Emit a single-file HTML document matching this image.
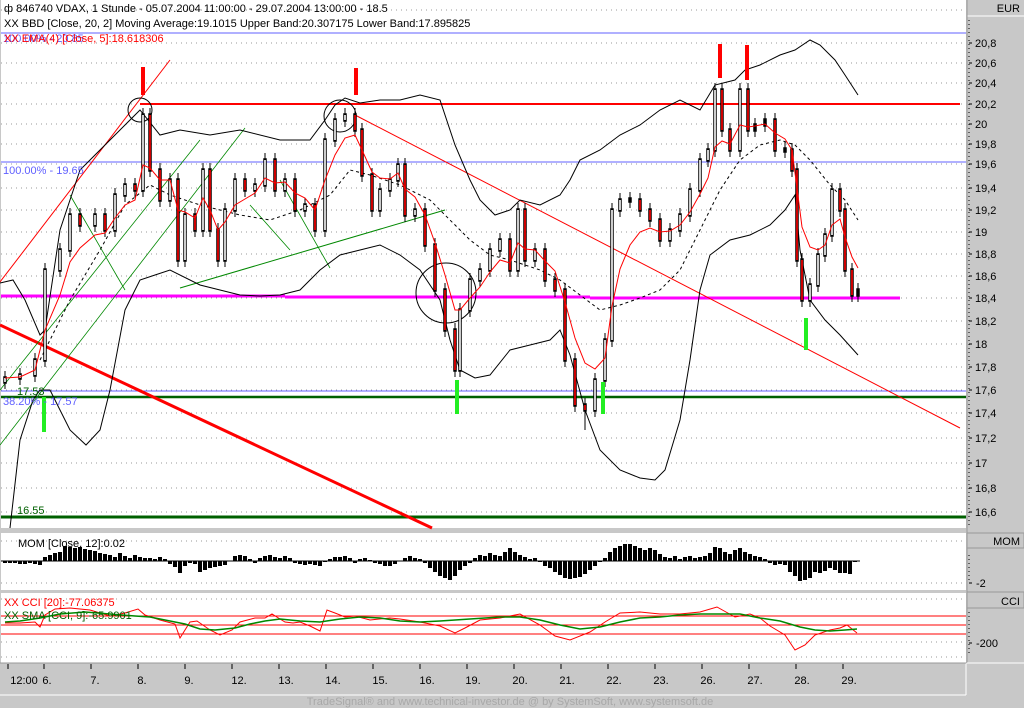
<!DOCTYPE html>
<html><head><meta charset="utf-8"><style>
body{margin:0;background:#c8c8c8;width:1024px;height:708px;overflow:hidden}
svg{position:absolute;left:0;top:0}
text{font-family:"Liberation Sans",sans-serif;font-size:11px}
</style></head><body>
<svg width="1024" height="708" xmlns="http://www.w3.org/2000/svg">
<rect x="0" y="0" width="1024" height="708" fill="#c8c8c8"/>
<rect x="1" y="0" width="965" height="528" fill="#fff"/>
<rect x="1" y="533" width="965" height="57" fill="#fff"/>
<rect x="1" y="593" width="965" height="70" fill="#fff"/>
<line x1="966" y1="663" x2="966" y2="695" stroke="#fff"/>
<line x1="0" y1="695" x2="966" y2="695" stroke="#fff"/>
<line x1="0" y1="663" x2="966" y2="663" stroke="#999"/>
<line x1="967" y1="16" x2="1024" y2="16" stroke="#fff"/>
<line x1="967" y1="0" x2="967" y2="663" stroke="#999"/>
<text x="1020" y="12" font-size="12" text-anchor="end">EUR</text>
<rect x="967" y="533" width="57" height="15" fill="#c8c8c8" stroke="#999"/>
<text x="1020" y="545" font-size="12" text-anchor="end">MOM</text>
<rect x="967" y="592" width="57" height="16" fill="#c8c8c8" stroke="#999"/>
<text x="1020" y="605" font-size="12" text-anchor="end">CCI</text>
<line x1="967" y1="663" x2="1024" y2="663" stroke="#fff"/>

<!-- grid -->
<path d="M1 10H966M1 43H966M1 63H966M1 83H966M1 104H966M1 124H966M1 144H966M1 164H966M1 188H966M1 210H966M1 232H966M1 254H966M1 276H966M1 298H966M1 321H966M1 344H966M1 367H966M1 390H966M1 413H966M1 438H966M1 463H966M1 488H966M1 512H966M1 541H966M1 583H966M1 599H966M1 642H966M1 657H966" stroke="#999" stroke-dasharray="1 4"/>
<path d="M969 20V528M969 555V583M969 612V655" stroke="#000" stroke-dasharray="1 3"/>
<path d="M969 43h3M969 63h3M969 83h3M969 104h3M969 124h3M969 144h3M969 164h3M969 188h3M969 210h3M969 232h3M969 254h3M969 276h3M969 298h3M969 321h3M969 344h3M969 367h3M969 390h3M969 413h3M969 438h3M969 463h3M969 488h3M969 512h3M969 583h3M969 643h3" stroke="#000"/>
<g font-size="12">
<text x="975" y="47">20,8</text><text x="975" y="67">20,6</text><text x="975" y="87">20,4</text><text x="975" y="108">20,2</text><text x="975" y="128">20</text><text x="975" y="148">19,8</text><text x="975" y="168">19,6</text><text x="975" y="192">19,4</text><text x="975" y="214">19,2</text><text x="975" y="236">19</text><text x="975" y="258">18,8</text><text x="975" y="280">18,6</text><text x="975" y="302">18,4</text><text x="975" y="325">18,2</text><text x="975" y="348">18</text><text x="975" y="371">17,8</text><text x="975" y="394">17,6</text><text x="975" y="417">17,4</text><text x="975" y="442">17,2</text><text x="975" y="467">17</text><text x="975" y="492">16,8</text><text x="975" y="516">16,6</text>
<text x="976" y="587">-2</text><text x="976" y="647">-200</text>
</g>
<!-- time axis -->
<path d="M8 664v5M44 664v5M91 664v5M138 664v5M185 664v5M232 664v5M279 664v5M326 664v5M373 664v5M420 664v5M467 664v5M514 664v5M561 664v5M608 664v5M655 664v5M702 664v5M749 664v5M796 664v5M843 664v5" stroke="#000"/>
<g font-size="12" text-anchor="middle">
<text x="24" y="684">12:00</text><text x="47" y="684">6.</text><text x="95" y="684">7.</text><text x="142" y="684">8.</text><text x="189" y="684">9.</text><text x="239" y="684">12.</text><text x="286" y="684">13.</text><text x="333" y="684">14.</text><text x="380" y="684">15.</text><text x="427" y="684">16.</text><text x="473" y="684">19.</text><text x="520" y="684">20.</text><text x="567" y="684">21.</text><text x="614" y="684">22.</text><text x="661" y="684">23.</text><text x="708" y="684">26.</text><text x="755" y="684">27.</text><text x="802" y="684">28.</text><text x="849" y="684">29.</text>
</g>

<!-- lines -->
<path d="M1 33H966M1 162H966M1 391H966" stroke="#6060ff"/>
<path d="M1 397H966" stroke="#006000" stroke-width="2.5"/>
<path d="M1 517H966" stroke="#006000" stroke-width="3"/>
<path d="M140 104H960" stroke="#f00" stroke-width="2"/>
<path d="M1 296H285M285 297H590M590 298H900" stroke="#f0f" stroke-width="3"/>
<path d="M0 325L432 528" stroke="#f00" stroke-width="3"/>
<path d="M355 115L960 428M0 282L170 60" stroke="#f00"/>
<path d="M0 445L245 128M0 390L200 140M70 195L125 290M280 180L330 268M250 205L290 250" stroke="#080" stroke-width="0.8"/>
<path d="M180 288L445 210" stroke="#080"/>
<circle cx="140" cy="110" r="12" fill="none" stroke="#000"/>
<circle cx="340" cy="116" r="16" fill="none" stroke="#000"/>
<circle cx="446" cy="293" r="30" fill="none" stroke="#000"/>

<!-- bands -->
<polyline fill="none" stroke="#000" points="0,283 13,280 25,300 40,335 45,330 60,230 80,170 100,150 120,130 140,110 160,135 180,130 210,135 240,130 280,140 310,140 325,120 335,105 345,98 360,103 380,100 400,100 420,95 440,100 455,145 470,180 480,200 495,215 510,210 520,200 540,205 560,195 570,180 580,160 600,150 620,135 640,125 660,110 680,100 700,110 715,85 735,80 745,70 760,65 780,55 795,50 810,40 820,45 835,60 845,75 858,95"/>
<polyline fill="none" stroke="#000" points="10,528 20,440 33,400 40,390 50,390 60,410 70,430 86,445 100,430 110,390 125,310 140,280 155,275 170,270 200,285 240,295 260,296 280,295 300,290 320,270 340,255 360,250 380,245 400,255 420,270 440,300 450,340 460,370 475,378 490,375 510,350 530,345 550,340 560,330 570,355 585,410 600,450 620,470 640,478 655,480 665,470 680,420 690,360 700,290 710,255 730,240 750,235 770,225 785,210 795,195 800,250 810,300 825,320 840,335 858,355"/>
<polyline fill="none" stroke="#000" stroke-dasharray="3 3" points="40,360 70,300 100,250 125,205 150,185 170,195 200,205 240,215 270,220 300,210 330,195 350,170 370,175 400,185 430,200 450,220 470,240 490,255 510,260 540,270 560,280 580,295 600,310 620,305 640,298 660,290 680,270 700,230 720,190 740,160 760,145 780,140 795,145 810,160 830,185 845,200 858,220"/>

<!-- wicks -->
<path stroke="#000" d="M5 371V389M20 368V385M35 353V382M45 263V367M60 243V277M70 208V257M95 208V232M115 188V237M125 178V202M143 108V197M170 173V207M185 208V267M203 163V237M225 203V267M235 173V217M255 178V197M265 153V192M285 173V197M305 198V217M325 133V237M335 113V147M345 108V127M380 183V217M390 173V197M398 158V187M415 203V222M460 303V377M470 273V317M480 263V287M490 243V277M500 233V257M518 203V277M535 243V267M595 373V417M605 333V387M612 203V347M620 193V217M630 192V208M670 223V247M680 208V237M690 183V222M700 153V197M708 143V167M715 83V157M740 83V157M755 118V137M765 113V132M785 142V158M810 278V307M818 248V292M825 228V262M832 183V242M858 283V302M80 208V232M105 208V237M135 178V197M150 108V177M160 163V207M178 173V267M195 208V237M210 163V237M218 223V267M245 173V197M275 153V197M295 173V217M315 198V237M355 108V137M362 123V182M372 168V217M405 158V222M425 203V252M435 238V297M445 283V337M455 323V377M510 233V277M525 203V267M545 243V287M555 273V297M565 283V367M575 353V412M585 398V430M640 193V217M650 203V227M660 213V247M722 83V137M730 123V157M748 83V137M775 113V157M792 143V177M797 163V267M802 253V307M840 183V217M845 203V277M852 263V302"/>
<!-- body outlines -->
<path stroke="#000" stroke-width="3.5" stroke-linecap="square" d="M5 378V382M20 375V378M35 360V375M45 270V360M60 250V270M70 215V250M95 215V225M115 195V230M125 185V195M143 115V190M170 180V200M185 215V260M203 170V230M225 210V260M235 180V210M255 185V190M265 160V185M285 180V190M305 205V210M325 140V230M335 120V140M345 115V120M380 190V210M390 180V190M398 165V180M415 210V215M460 310V370M470 280V310M480 270V280M490 250V270M500 240V250M518 210V270M535 250V260M595 380V410M605 340V380M612 210V340M620 200V210M630 199V201M670 230V240M680 215V230M690 190V215M700 160V190M708 150V160M715 90V150M740 90V150M755 125V130M765 120V125M785 149V151M810 285V300M818 255V285M825 235V255M832 190V235M858 290V295M80 215V225M105 215V230M135 185V190M150 115V170M160 170V200M178 180V260M195 215V230M210 170V230M218 230V260M245 180V190M275 160V190M295 180V210M315 205V230M355 115V130M362 130V175M372 175V210M405 165V215M425 210V245M435 245V290M445 290V330M455 330V370M510 240V270M525 210V260M545 250V280M555 280V290M565 290V360M575 360V405M585 405V410M640 200V210M650 210V220M660 220V240M722 90V130M730 130V150M748 90V130M775 120V150M792 150V170M797 170V260M802 260V300M840 190V210M845 210V270M852 270V295"/>
<path stroke="#fff" stroke-width="1.6" d="M5 378V382M20 375V378M35 360V375M45 270V360M60 250V270M70 215V250M95 215V225M115 195V230M125 185V195M143 115V190M170 180V200M185 215V260M203 170V230M225 210V260M235 180V210M255 185V190M265 160V185M285 180V190M305 205V210M325 140V230M335 120V140M345 115V120M380 190V210M390 180V190M398 165V180M415 210V215M460 310V370M470 280V310M480 270V280M490 250V270M500 240V250M518 210V270M535 250V260M595 380V410M605 340V380M612 210V340M620 200V210M670 230V240M680 215V230M690 190V215M700 160V190M708 150V160M715 90V150M740 90V150M810 285V300M818 255V285M825 235V255M832 190V235"/>
<path stroke="#f00" stroke-width="1.6" d="M80 215V225M105 215V230M135 185V190M150 115V170M160 170V200M178 180V260M195 215V230M210 170V230M218 230V260M245 180V190M275 160V190M295 180V210M315 205V230M355 115V130M362 130V175M372 175V210M405 165V215M425 210V245M435 245V290M445 290V330M455 330V370M510 240V270M525 210V260M545 250V280M555 280V290M565 290V360M575 360V405M585 405V410M640 200V210M650 210V220M660 220V240M722 90V130M730 130V150M748 90V130M775 120V150M792 150V170M797 170V260M802 260V300M840 190V210M845 210V270M852 270V295"/>
<!-- EMA -->
<polyline fill="none" stroke="#f00" points="5,378 20,377 35,370 45,330 60,295 70,262 80,248 95,235 105,233 115,218 125,205 135,200 143,165 150,168 160,180 170,180 178,210 185,212 195,218 203,198 210,210 218,230 225,222 235,205 245,199 255,193 265,178 275,183 285,182 295,193 305,198 315,210 325,180 335,155 345,138 355,135 362,150 372,172 380,178 390,179 398,173 405,189 415,197 425,215 435,243 445,275 455,310 460,310 470,298 480,287 490,272 500,260 510,263 518,243 525,249 535,250 545,261 555,271 565,302 575,338 585,363 595,369 605,358 612,306 620,269 630,245 640,232 650,228 660,232 670,231 680,225 690,212 700,194 708,178 715,147 722,141 730,144 740,125 748,127 755,126 765,124 775,133 785,139 792,150 797,188 802,227 810,247 818,250 825,245 832,225 840,219 845,237 852,257 858,268"/>
<!-- signals -->
<path d="M143 67V95M356 68V95M720 44V78M747 45V80" stroke="#f00" stroke-width="4"/>
<path d="M44 397V432M457 380V414M603 382V414M806 318V350" stroke="#2e2" stroke-width="4"/>

<!-- MOM -->
<path d="M1 561H860" stroke="#000"/>
<path stroke="#000" stroke-width="4" d="M5 561V563M10 561V563M15 561V563M20 561V564M25 561V564M30 561V563M35 561V564M40 561V565M45 561V557M50 561V555M55 561V553M60 561V552M65 561V546M70 561V547M75 561V548M80 561V547M85 561V549M90 561V550M95 561V551M100 561V553M105 561V554M110 561V555M115 561V557M120 561V553M125 561V556M130 561V558M135 561V555M140 561V557M145 561V558M150 561V558M155 561V559M160 561V557M165 561V559M170 561V564M175 561V567M180 561V573M185 561V566M190 561V563M195 561V564M200 561V572M205 561V570M210 561V568M215 561V567M220 561V566M225 561V565M235 561V556M240 561V555M245 561V556M250 561V559M255 561V563M260 561V558M265 561V556M270 561V555M275 561V557M280 561V558M285 561V556M290 561V558M295 561V563M300 561V564M305 561V565M310 561V564M315 561V565M320 561V566M325 561V562M330 561V559M335 561V557M340 561V557M345 561V556M350 561V558M355 561V563M360 561V559M365 561V558M370 561V560M375 561V563M380 561V564M385 561V566M390 561V566M395 561V564M405 561V558M410 561V556M415 561V558M420 561V559M425 561V563M430 561V568M435 561V572M440 561V576M445 561V578M450 561V580M455 561V576M460 561V570M465 561V566M470 561V563M475 561V558M480 561V555M485 561V556M490 561V553M495 561V555M500 561V556M505 561V552M510 561V548M515 561V552M520 561V555M525 561V557M530 561V559M535 561V558M540 561V562M545 561V566M550 561V568M555 561V572M560 561V575M565 561V578M570 561V579M575 561V578M580 561V577M585 561V574M590 561V570M595 561V566M600 561V562M605 561V558M610 561V552M615 561V548M620 561V546M625 561V544M630 561V544M635 561V546M640 561V548M645 561V550M650 561V548M655 561V550M660 561V554M665 561V557M670 561V558M675 561V556M680 561V559M685 561V557M690 561V556M695 561V558M700 561V557M705 561V556M710 561V553M715 561V547M720 561V548M725 561V552M730 561V554M735 561V550M740 561V548M745 561V552M750 561V554M755 561V556M760 561V557M765 561V559M770 561V563M775 561V565M780 561V564M785 561V565M790 561V572M795 561V576M800 561V581M805 561V580M810 561V578M815 561V572M820 561V573M825 561V571M830 561V568M835 561V570M840 561V573M845 561V573M850 561V574M855 561V562"/>

<!-- CCI -->
<path d="M1 616H966M1 625H966M1 634H966" stroke="#f00"/>
<polyline fill="none" stroke="#f00" points="5,623 20,623 35,622 40,627 45,615 55,609 70,608 90,610 110,616 125,613 138,609 145,615 160,620 175,624 180,638 190,622 197,621 210,630 220,635 232,630 240,622 255,618 265,618 272,614 280,619 285,622 293,623 300,622 310,626 320,631 327,610 335,613 345,617 355,616 370,620 390,618 400,619 420,622 440,626 455,633 465,628 480,620 500,618 520,614 540,625 555,636 570,640 590,632 605,622 620,613 640,612 660,614 680,614 700,612 717,607 735,617 750,614 760,618 770,626 785,635 795,650 805,645 815,635 830,630 840,628 847,625 857,633"/>
<polyline fill="none" stroke="#080" stroke-width="1.5" points="5,622 20,621 40,618 60,614 85,612 110,614 135,616 150,617 165,620 185,624 200,629 215,630 235,628 250,624 265,621 280,619 300,621 320,622 340,619 360,617 380,618 400,621 420,622 440,621 470,619 500,617 520,617 540,620 560,625 580,629 600,627 620,622 640,618 660,617 680,615 700,614 720,614 740,614 760,618 780,621 800,627 815,630 830,631 845,630 857,629"/>

<!-- texts -->
<text x="4" y="12" font-size="12">ф 846740  VDAX, 1 Stunde - 05.07.2004 11:00:00 - 29.07.2004 13:00:00 - 18.5</text>
<text x="4" y="27" font-size="12">XX BBD [Close, 20, 2] Moving Average:19.1015 Upper Band:20.307175 Lower Band:17.895825</text>
<text x="3" y="42" font-size="12" fill="#6060ff">100.00% - 20.85</text>
<text x="4" y="42" font-size="12" fill="#f00">XX EMA(4) [Close, 5]:18.618306</text>
<text x="3" y="174" fill="#6060ff">100.00% - 19.65</text>
<text x="17" y="395" fill="#006000">17.53</text>
<text x="3" y="405" fill="#6060ff">38.20% - 17.57</text>
<text x="17" y="514" fill="#006000">16.55</text>
<text x="18" y="547">MOM [Close, 12]:0.02</text>
<text x="4" y="606" fill="#f00">XX CCI [20]:-77.06375</text>
<text x="4" y="619" fill="#006000">XX SMA [CCI, 9]:-65.9901</text>
<text x="510" y="705" font-size="10" fill="#a8a8a8" text-anchor="middle">TradeSignal® and www.technical-investor.de @ by SystemSoft, www.systemsoft.de</text>
</svg>
</body></html>
